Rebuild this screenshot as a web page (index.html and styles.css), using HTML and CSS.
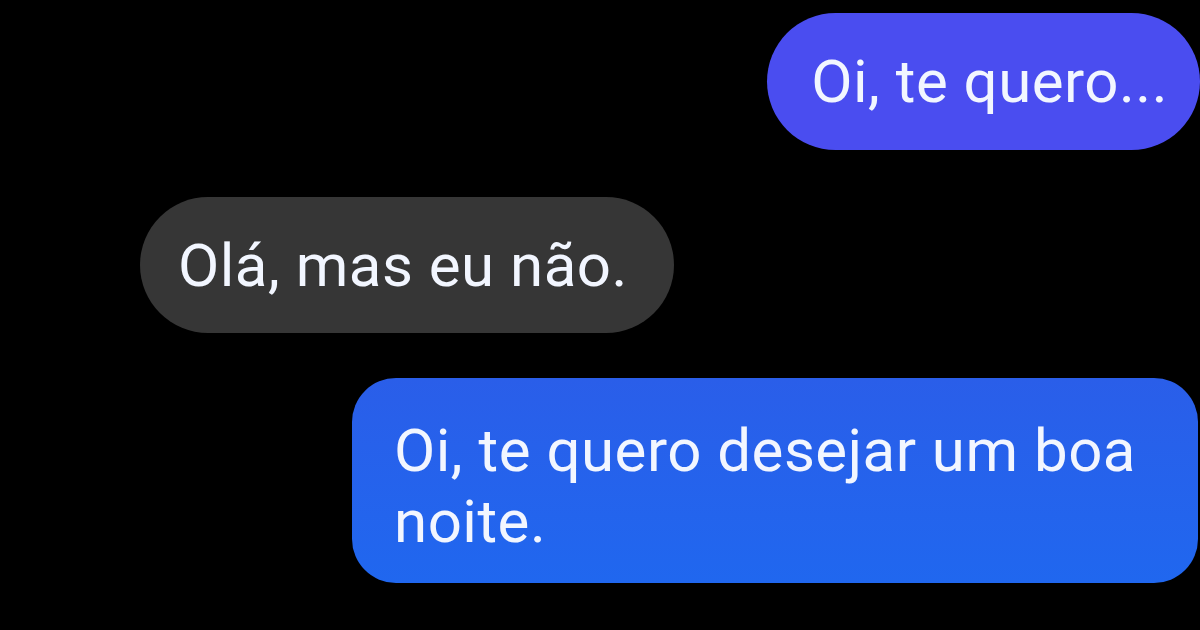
FILE: index.html
```html
<!DOCTYPE html>
<html lang="pt">
<head>
<meta charset="utf-8">
<title>Chat</title>
<link rel="stylesheet" href="styles.css">
</head>
<body>
<main class="chat">
  <div class="bubble sent first">Oi, te quero...</div>
  <div class="bubble received">Olá, mas eu não.</div>
  <div class="bubble sent long">Oi, te quero desejar um boa noite.</div>
</main>
</body>
</html>
```
FILE: styles.css
```css
html, body {
  margin: 0;
  padding: 0;
  background: #000;
  width: 1200px;
  height: 630px;
  overflow: hidden;
}

.chat {
  display: flex;
  flex-direction: column;
  padding-top: 13px;
  font-family: Roboto, "Noto Sans", sans-serif;
  font-size: 60px;
  line-height: 71px;
  letter-spacing: 0.5px;
  color: #f2f6ff;
}

.bubble {
  box-sizing: border-box;
  border-radius: 70px;
}

.sent.first {
  align-self: flex-end;
  background: #4a4df0;
  padding: 33px 32px 33px 44px;
}

.received {
  align-self: flex-start;
  margin-left: 140px;
  margin-top: 47px;
  background: #363636;
  padding: 33px 46px 32px 38px;
}

.sent.long {
  align-self: flex-end;
  width: 846px;
  margin-right: 2px;
  margin-top: 45px;
  border-radius: 44px;
  background: linear-gradient(180deg, #2a5ee9 0%, #2067ef 100%);
  padding: 37px 40px 26px 42px;
}
```
